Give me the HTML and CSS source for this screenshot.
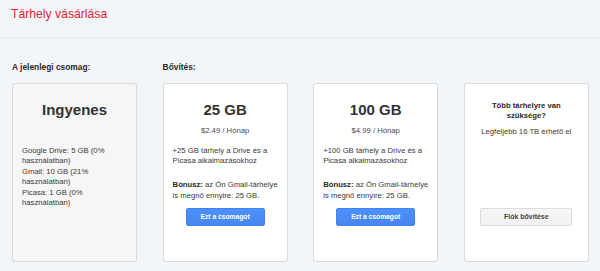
FILE: index.html
```html
<!DOCTYPE html>
<html lang="hu">
<head>
    <meta charset="UTF-8" />
    <title>Tárhely vásárlása</title>
    <link rel="stylesheet" href="styles.css">
</head>
<body>
    <div class="fejlec">
        <h1>Tárhely vásárlása</h1>
    </div>

    <div class="tartalom">
        <div class="csomagok">
            <div class="cimke">A jelenlegi csomag:</div>
            <div class="cimke cimke-bovites">Bővítés:</div>

            <div class="kartya kartya-jelenlegi">
                <div class="kartya-cim">Ingyenes</div>
                <div class="kartya-lista">
                    Google Drive: 5 GB (0% használatban)<br>
                    Gmail: 10 GB (21% használatban)<br>
                    Picasa: 1 GB (0% használatban)
                </div>
            </div>

            <div class="kartya">
                <div class="kartya-cim">25 GB</div>
                <div class="kartya-ar">$2.49 / Hónap</div>
                <div class="kartya-leiras">+25 GB tárhely a Drive és a Picasa alkalmazásokhoz</div>
                <div class="kartya-bonusz"><span class="bonusz-cimke">Bónusz:</span> az Ön Gmail-tárhelye<br>is megnő ennyire: 25 GB.</div>
                <button class="gomb gomb-kek">Ezt a csomagot</button>
            </div>

            <div class="kartya">
                <div class="kartya-cim">100 GB</div>
                <div class="kartya-ar">$4.99 / Hónap</div>
                <div class="kartya-leiras">+100 GB tárhely a Drive és a Picasa alkalmazásokhoz</div>
                <div class="kartya-bonusz"><span class="bonusz-cimke">Bónusz:</span> az Ön Gmail-tárhelye<br>is megnő ennyire: 25 GB.</div>
                <button class="gomb gomb-kek">Ezt a csomagot</button>
            </div>

            <div class="kartya kartya-tobb">
                <div class="tobb-cim">Több tárhelyre van szüksége?</div>
                <div class="tobb-szoveg">Legfeljebb 16 TB érhető el</div>
                <button class="gomb gomb-szurke">Fiók bővítése</button>
            </div>
        </div>
    </div>
</body>
</html>
```

FILE: styles.css
```css
* {
    margin: 0;
    padding: 0;
    box-sizing: border-box;
}

body {
    font-family: "Liberation Sans", Arial, sans-serif;
    background: #f3f6f9;
    color: #3a3a3a;
}

.fejlec {
    height: 38px;
    padding: 7px 11px 0;
    border-bottom: 1px solid #e9e9e9;
}

h1 {
    font-size: 12.2px;
    line-height: 14px;
    font-weight: normal;
    color: #e0262f;
}

.tartalom {
    padding: 24px 11px 0 12px;
}

.csomagok {
    display: grid;
    grid-template-columns: repeat(4, 125px);
    column-gap: 25.6px;
}

.cimke {
    font-size: 8.4px;
    line-height: 10px;
    font-weight: bold;
    color: #2a2a2a;
    margin-bottom: 11px;
}

.cimke-bovites {
    grid-column: 2 / 5;
}

.kartya {
    height: 179px;
    background: #ffffff;
    border: 1px solid #dadada;
    border-radius: 3px;
    box-shadow: 0 0 1px rgba(0, 0, 0, 0.08);
    padding: 16px 8px 35px;
    display: flex;
    flex-direction: column;
    font-size: 7.7px;
    line-height: 10.5px;
}

.kartya-jelenlegi {
    background: #f6f6f6;
}

.kartya-cim {
    font-size: 15px;
    line-height: 20px;
    font-weight: bold;
    color: #333;
    text-align: center;
}

.kartya-ar {
    margin-top: 5.5px;
    text-align: center;
    color: #4a4a4a;
}

.kartya-lista {
    margin-top: 25.5px;
    padding-left: 1px;
}

.kartya-leiras {
    margin-top: 9.5px;
    padding-left: 1px;
}

.kartya-bonusz {
    margin-top: 12px;
    line-height: 11.5px;
    padding-left: 1px;
    white-space: nowrap;
}

.bonusz-cimke {
    font-weight: bold;
    color: #2a2a2a;
}

.tobb-cim {
    font-weight: bold;
    color: #2a2a2a;
    text-align: center;
    line-height: 10px;
    padding: 0 8px;
    margin-top: 0.5px;
}

.tobb-szoveg {
    margin-top: 6px;
    text-align: center;
}

.gomb {
    margin-top: auto;
    align-self: center;
    height: 18.5px;
    border-radius: 2px;
    font-family: "Liberation Sans", Arial, sans-serif;
    font-weight: bold;
    cursor: pointer;
}

.gomb-kek {
    width: 79px;
    font-size: 6.7px;
    color: #ffffff;
    background: linear-gradient(#4d90fe, #4787ed);
    border: 1px solid #3f84f0;
}

.gomb-szurke {
    width: 92px;
    font-size: 7px;
    color: #444;
    background: linear-gradient(#f6f6f6, #f1f1f1);
    border: 1px solid #dcdcdc;
}
```
